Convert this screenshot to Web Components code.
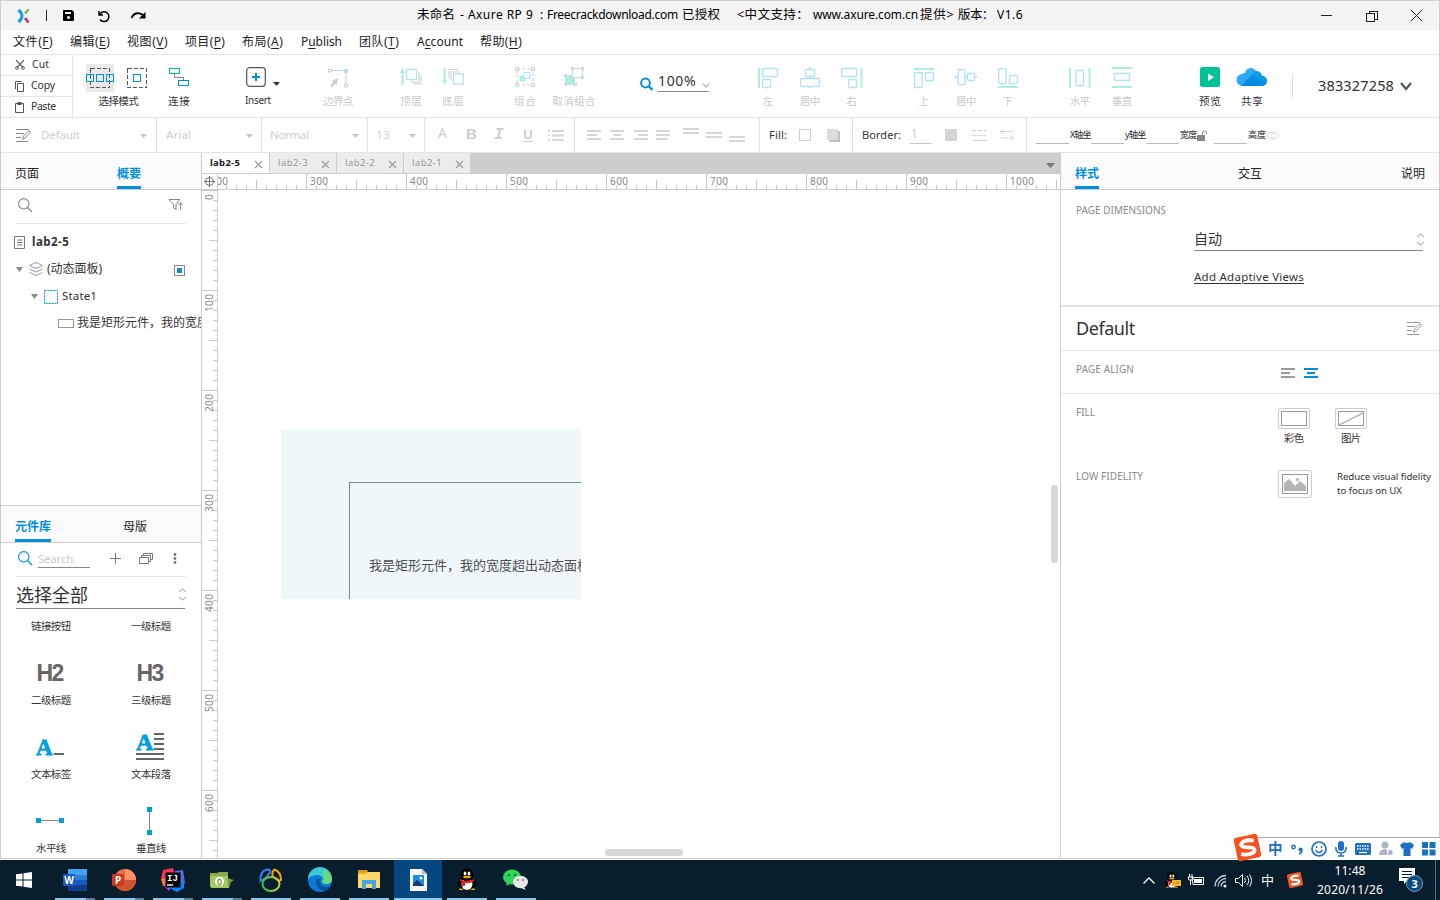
<!DOCTYPE html>
<html lang="zh-CN">
<head>
<meta charset="utf-8">
<title>Axure RP 9</title>
<style>
html,body{margin:0;padding:0;width:1440px;height:900px;overflow:hidden;background:#fff}
body{font-family:"Noto Sans","Noto Sans CJK SC",sans-serif;font-size:12px;color:#333}
</style>
</head>
<body>
<axure-desktop></axure-desktop>
<script>
const define=(name,css,html)=>{
  const tpl=document.createElement('template');
  tpl.innerHTML='<style>*{box-sizing:border-box}:host{display:block;box-sizing:border-box}svg{display:block;flex:none;overflow:visible}'+css+'</style>'+html;
  customElements.define(name,class extends HTMLElement{
    constructor(){super();this.attachShadow({mode:'open'})}
    connectedCallback(){if(!this.shadowRoot.firstChild)this.shadowRoot.appendChild(tpl.content.cloneNode(true))}
  });
};
const svg=(w,h,body,style='')=>`<svg width="${w}" height="${h}" viewBox="0 0 ${w} ${h}" fill="none" style="${style}">${body}</svg>`;

/* Single line of text, tracked out or in to a given width */
customElements.define('ax-text',class extends HTMLElement{
  connectedCallback(){
    if(this.shadowRoot)return;
    const g=(n,d)=>this.getAttribute(n)??d;
    const w=+g('w',0),s=g('s',12);
    this.attachShadow({mode:'open'}).innerHTML=`<style>:host{display:block;flex:none;position:relative;top:${g('dy',0)}px;margin-left:${g('ml',0)}px;${w?`width:${w}px;`:''}font-size:${s}px;line-height:${Math.ceil(s*1.3)}px;height:${Math.ceil(s*1.3)}px;${g('c','')?`color:${g('c')};`:''}${this.hasAttribute('b')?'font-weight:700;':''}${this.hasAttribute('u')?'text-decoration:underline;text-underline-offset:2px;':''}white-space:pre}span{display:inline-block;text-decoration:inherit}</style><span><slot></slot></span>`;
    if(w){
      const sp=this.shadowRoot.querySelector('span'),n=[...this.textContent].length,nat=sp.getBoundingClientRect().width;
      if(nat)sp.style.letterSpacing=((w-nat)/Math.max(1,n-.5)).toFixed(3)+'px';
    }
  }
});
const T=(t,w,s=12,ml=0,x='')=>`<ax-text w="${w}" s="${s}" ml="${ml}" ${x}>${t}</ax-text>`;

/* Title bar */
define('ax-titlebar',`:host{height:30px;background:#f3f3f3;border-top:1px solid #ccc;display:flex;align-items:center;color:#000}`,
 svg(13,14,`<path d="M1.500 1 Q8.500 7 1.500 13" stroke="#139fe0" stroke-width="3"/><path d="M11.500 .5L8 4.500" stroke="#7ac143" stroke-width="2.600"/><path d="M8 9L11.500 13.500" stroke="#e91e8c" stroke-width="2.600"/>`,'margin-left:16px')
 +svg(1,11,'<path d="M.5 0V11" stroke="#222"/>','margin-left:16px')
 +svg(11,11,'<path d="M1 0h8l2 2v8a1 1 0 0 1-1 1H1a1 1 0 0 1-1-1V1a1 1 0 0 1 1-1z" fill="#000"/><rect x="2" y="2" width="6" height="2" fill="#f3f3f3"/><circle cx="5.500" cy="7.500" r="1.600" fill="#f3f3f3"/>','margin-left:16px')
 +svg(13,12,'<path d="M2 1v4h4M2.500 4.800A4.900 4.900 0 1 1 3 9.500" stroke="#000" stroke-width="1.500"/>','margin-left:23px')
 +svg(15,9,'<path d="M.5 7C3 1 9 1 13 5" stroke="#000" stroke-width="1.800"/><path d="M14.500 1v6.500H8z" fill="#000"/>','margin-left:21px')
 +T('未命名',38,12.5,271,'dy="-1"')+T('- Axure RP 9',73,12,5,'dy="-1"')+T(':',3,12,7,'dy="-1"')+T('Freecrackdownload.com',131,12,4,'dy="-1"')+T('已授权',38,12.5,4,'dy="-1"')+T('&lt;中文支持：',72,12.5,17,'dy="-1"')+T('www.axure.com.cn',105,12,4,'dy="-1"')+T('提供&gt;',34,12.5,2,'dy="-1"')+T('版本：',36,12.5,4,'dy="-1"')+T('V1.6',26,12,3,'dy="-1"')
 +svg(11,1,'<path d="M0 .5H11" stroke="#222"/>','margin-left:298px')
 +svg(12,12,'<path d="M.5 3.500h8v8h-8zM3 3V1h8v8H9" stroke="#222" shape-rendering="crispEdges"/>','margin-left:34px')
 +svg(11,11,'<path d="M0 0L11 11M11 0L0 11" stroke="#222"/>','margin-left:33px'));

/* Menu bar */
define('ax-menubar',`:host{height:25px;border-bottom:1px solid #e4e4e4;display:flex;align-items:center;color:#222}u{text-underline-offset:2px}`,
 T('文件(<u>F</u>)',40,12,12)+T('编辑(<u>E</u>)',40,12,17)+T('视图(<u>V</u>)',41,12,17)+T('项目(<u>P</u>)',40,12,17)+T('布局(<u>A</u>)',41,12,17)+T('P<u>u</u>blish',41,12,18)+T('团队(<u>T</u>)',40,12,17)+T('A<u>c</u>count',46,12,18)+T('帮助(<u>H</u>)',42,12,17));

/* Toolbar button: icon area with caption underneath */
customElements.define('ax-tool',class extends HTMLElement{
  connectedCallback(){
    if(this.shadowRoot)return;
    const g=(n,d)=>this.getAttribute(n)??d;
    this.attachShadow({mode:'open'}).innerHTML=`<style>:host{display:flex;flex-direction:column;align-items:center;flex:none;width:${g('w',28)}px;margin-left:${g('ml',14)}px;color:${this.hasAttribute('dim')?'#c9c9c9':'#333'}}div{height:28px;display:flex;align-items:center;gap:9px;justify-content:center;position:relative}ax-text{margin-top:2px;left:${g('dx',0)}px}</style><div><slot></slot></div>${T(g('label'),g('lw',20),g('s',10.5))}`;
  }
});
const tool=(label,lw,ml,icon,x='dim')=>`<ax-tool label="${label}" lw="${lw}" ml="${ml}" ${x}>${icon}</ax-tool>`;
const B='#b4dff8',G='#aeeedd';
const A=(body)=>svg(20,20,`<g stroke-width="1.300">${body}</g>`);
define('ax-clip',`:host{width:72px;border-right:1px solid #e4e4e4;display:grid;grid-template-rows:20px 21px 21px;color:#333;flex:none}div{display:flex;align-items:center;padding-left:14px}div+div{border-top:1px solid #e4e4e4}`,
 '<div>'+svg(10,10,'<path d="M1 0L8 7.500M9 0L2 7.500" stroke="#666" stroke-width="1.200"/><circle cx="2" cy="8" r="1.400" stroke="#666"/><circle cx="8" cy="8" r="1.400" stroke="#666"/>')+T('Cut',17,10.5,7,'dy="-1"')
 +'</div><div>'+svg(10,11,'<path d="M2.500 2.500h6v8h-6zM.5 8V.5h6" stroke="#555"/>')+T('Copy',24,10.5,6,'dy="-1"')
 +'</div><div>'+svg(10,11,'<path d="M.5 1.500h8v9h-8z" stroke="#555"/><path d="M2.500 0h4v3h-4z" fill="#555"/>')+T('Paste',25,10.5,6,'dy="-1"')+'</div>');
define('ax-zoom',`:host{display:flex;flex:none;margin-left:52px;height:28px;padding-top:7px}div{width:52px;margin-left:4px;height:21px;display:flex;align-items:flex-start;position:relative;background:linear-gradient(#888,#888) 0 20px/51px 1px no-repeat}`,
 svg(14,14,'<circle cx="5.500" cy="6" r="4.400" stroke="#008fe0" stroke-width="2"/><path d="M8.500 9l4 4" stroke="#008fe0" stroke-width="2.400"/>','margin-top:6px')
 +'<div>'+T('100%',38,14,0)+svg(8,5,'<path d="M.5 .5L4 4 7.500 .5" stroke="#bbb" stroke-width="1.400"/>','margin:12px 0 0 6px')+'</div>');
define('ax-toolbar',`:host{height:63px;border-bottom:1px solid #e4e4e4;display:flex}.sel{display:flex;background:#e9e9e9;width:28px;height:28px;align-items:center;justify-content:center}.row{display:flex;flex:1;padding-top:9px}.bar{width:1px;height:24px;background:#ddd;margin:10px 0 0 25px}`,
 `<ax-clip></ax-clip><div class="row">`
 +tool('选择模式',40,13,'<div class="sel">'+svg(28,20,'<g shape-rendering="crispEdges"><rect x="4.500" y=".5" width="19" height="19" stroke="#555" stroke-dasharray="4 2"/><path d="M.5 6.500h7v7h-7zM10.500 6.500h7v7h-7zM20.500 6.500h7v7h-7z" stroke="#008fe0"/></g>')+'</div>'+svg(28,20,'<g shape-rendering="crispEdges"><rect x="4.500" y=".5" width="19" height="19" stroke="#555" stroke-dasharray="4 2"/><path d="M10.500 6.500h7v7h-7z" stroke="#008fe0"/></g>'),'w="65"')
 +tool('连接',22,14,svg(20,18,'<g shape-rendering="crispEdges"><path d="M5.500 5v4.500h9V13" stroke="#888"/><rect x=".5" y=".5" width="10" height="5" stroke="#00bf8f"/><rect x="9.500" y="12.500" width="10" height="5" stroke="#008fe0"/></g>','margin-top:-2px'),'')
 +tool('Insert',26,49,svg(20,20,'<rect x=".7" y=".7" width="18.600" height="18.600" rx="3" stroke="#555" stroke-width="1.200"/><path d="M6 10h8M10 6v8" stroke="#008fe0" stroke-width="2"/>','margin-top:-2px'),'dx="2" s="10"')
 +svg(7,4,'<path d="M0 0h7L3.500 4z" fill="#333"/>','margin:18px 0 0 3px')
 +tool('边界点',30,44,svg(20,20,`<path d="M2 2.500h16v15" stroke="#ccc"/><path d="M.5 1h3v3h-3zM16.500 16h3v3h-3z" stroke="#ccc" fill="#fff"/><path d="M16 1h4v4h-4z" fill="${B}"/><path d="M10 10L3 13l2.500 1L2 18l2 1 3.500-3.500 1 2z" fill="#ccc"/>`))
 +tool('顶层',22,45,svg(22,18,`<path d="M2.500 17V3" stroke="${G}" stroke-width="2"/><path d="M0 5L2.500 0 5 5z" fill="${G}"/><path d="M10 14h9V4M13 16h8V7" stroke="#ccc"/><rect x="6.500" y="1.500" width="10" height="10" stroke="${B}" stroke-width="1.300" fill="#fff"/>`,'margin-top:-2px'))
 +tool('底层',22,14,svg(22,18,`<path d="M2.500 0V13" stroke="${G}" stroke-width="2"/><path d="M0 12L2.500 17 5 12z" fill="${G}"/><path d="M7 10V1.500h9M9 13V4h9" stroke="#ccc"/><rect x="11.500" y="6" width="10" height="10" stroke="${B}" stroke-width="1.300" fill="#fff"/>`,'margin-top:-2px'))
 +tool('组合',22,44,svg(20,20,`<rect x="2" y="2" width="16" height="16" stroke="#ccc" stroke-dasharray="3 2"/><g stroke="#ccc" fill="#fff"><path d="M.5.5h3v3h-3zM16.500.5h3v3h-3zM.5 16.500h3v3h-3zM16.500 16.500h3v3h-3z"/></g><path d="M4.500 8.500h6v6h-6z" fill="${G}"/><path d="M9 5.500h6v6h-6z" stroke="${B}" fill="#fff"/>`,'margin-top:-2px'))
 +tool('取消组合',43,21,svg(20,20,`<path d="M1 8h10v10H1z" fill="${G}"/><path d="M8.500 1.500h10v9h-10z" stroke="${B}" fill="#fff"/><g stroke="#ccc" fill="#fff"><path d="M7.500.5h2v2h-2zM17.500.5h2v2h-2zM17.500 9.500h2v2h-2zM.5 7.500h2v2h-2zM.5 16.500h2v2h-2zM10.500 16.500h2v2h-2zM7.500 10.500h2v2h-2z"/></g>`,'margin-top:-2px'))
 +`<ax-zoom></ax-zoom>`
 +tool('左',11,44,A(`<path d="M1 0v20" stroke="${G}" stroke-width="2"/><rect x="4.500" y=".5" width="15" height="8" rx="1" stroke="${B}"/><rect x="4.500" y="11.500" width="8" height="8" rx="1" stroke="${B}"/>`))
 +tool('居中',20,14,A(`<path d="M10 -1v21" stroke="${G}" stroke-width="2"/><rect x="5.500" y="1.500" width="9" height="7" rx="1" stroke="${B}" fill="#fff"/><rect x=".6" y="10.500" width="18.800" height="8" rx="1" stroke="${B}" fill="#fff"/>`))
 +tool('右',11,14,A(`<path d="M19.500 0v20" stroke="${G}" stroke-width="2"/><rect x="-.5" y=".5" width="15" height="8" rx="1" stroke="${B}"/><rect x="6.500" y="11.500" width="8" height="8" rx="1" stroke="${B}"/>`))
 +tool('上',11,44,A(`<path d="M0 1h20" stroke="${G}" stroke-width="2"/><rect x=".6" y="4.500" width="7.500" height="15" rx="1" stroke="${B}"/><rect x="11.500" y="4.500" width="8" height="8" rx="1" stroke="${B}"/>`))
 +tool('居中',20,14,A(`<path d="M-1 9h22" stroke="${G}" stroke-width="2"/><rect x="2" y="1.500" width="7" height="15" rx="1" stroke="${B}" fill="#fff"/><rect x="11.500" y="5.500" width="7" height="7" rx="1" stroke="${B}" fill="#fff"/>`))
 +tool('下',11,14,A(`<path d="M0 19h20" stroke="${G}" stroke-width="2"/><rect x=".6" y=".6" width="7.500" height="15" rx="1" stroke="${B}"/><rect x="11.500" y="7.600" width="8" height="8" rx="1" stroke="${B}"/>`))
 +tool('水平',20,44,A(`<path d="M0 0v20M19.500 0v20" stroke="${G}" stroke-width="2"/><rect x="6" y="2.500" width="7.500" height="15" rx="1" stroke="${B}"/>`))
 +tool('垂直',20,14,A(`<path d="M0 0h20M0 19h20" stroke="${G}" stroke-width="2"/><rect x="2.500" y="5.500" width="15" height="7" rx="1" stroke="${B}"/>`))
 +tool('预览',22,60,svg(20,20,'<rect width="20" height="20" rx="2.500" fill="#00c298"/><path d="M8 6.500v7.500l6-3.700z" fill="#fff"/>','margin-top:-2px'),'')
 +tool('共享',22,13,svg(30,20,'<path d="M6 19a6 6 0 0 1-1-12 5 5 0 0 1 3-1A6 6 0 0 1 19 4a6 6 0 0 1 6 5 5 5 0 0 1 0 10z" fill="#2ba9f5"/><path d="M14 8.500A6 6 0 0 1 25 9a5 5 0 0 1 0 10H4z" fill="#078de0"/><path d="M14 8.500L17 5a6 6 0 0 1 8 4 5 5 0 0 1 4.500 6z" fill="#0d9bee"/>','margin-top:-3px'),'w="30"')
 +'<div class="bar"></div>'+T('383327258',76,14.5,25,'dy="12"')+svg(12,9,'<path d="M1 1l5 6 5-6" stroke="#555" stroke-width="2.200"/>','margin:18px 0 0 6px')
 +'</div>');

/* Formatting bar */
const editIcon=(c)=>svg(15,13,`<path d="M0 .5h13M0 4.500h8M0 8.500h5M0 12.500h12" stroke="${c}"/><path d="M6.500 10.500l1-3.500L13 1.500l1.500 1.500L9 9z" stroke="${c}" fill="#fff"/>`);
const caret=svg(7,4,'<path d="M0 0h7L3.500 4z" fill="#c4c4c4"/>','margin-top:2px');
const lines=(w,h,rows,c='#d6d6d6')=>svg(w,h,`<g fill="${c}">`+rows.map(r=>`<rect x="${r[0]}" y="${r[1]}" width="${r[2]}" height="2"/>`).join('')+'</g>');
define('ax-formatbar',`:host{height:35px;border-bottom:1px solid #e4e4e4;display:flex;color:#cdcdcd}section{display:flex;align-items:center;flex:none;border-right:1px solid #e0e0e0;height:34px}.f{width:33px;height:1px;background:#bbb;align-self:flex-end;margin-bottom:8px}`,
 `<section style="width:156px;padding-left:15px">${editIcon('#888')}${T('Default',39,11.5,10,'dy="-1"')}<span style="flex:1"></span>${caret}<span style="width:9px"></span></section>
 <section style="width:105px;padding-left:9px">${T('Arial',25,11.5,0,'dy="-1"')}<span style="flex:1"></span>${caret}<span style="width:8px"></span></section>
 <section style="width:106px;padding-left:8px">${T('Normal',39,11.5,0,'dy="-1"')}<span style="flex:1"></span>${caret}<span style="width:8px"></span></section>
 <section style="width:57px;padding-left:8px">${T('13',14,11.5,0,'dy="-1"')}<span style="flex:1"></span>${caret}<span style="width:8px"></span></section>
 <section style="width:150px;padding-left:13px">${T('A',10,13.5,0,'dy="-2"')}${T('B',9,15,18,'b dy="-1" style="font-family:\'Liberation Sans\'"')}<ax-text w="11" s="16" ml="19" b style="font-style:italic;font-family:'Liberation Mono'">I</ax-text>${T('U',10,13,18,'b u dy="-1"')}${svg(16,11,'<g fill="#d6d6d6"><path d="M0 0h2v2H0zM0 4.500h2v2H0zM0 9h2v2H0zM4 0h12v2H4zM4 4.500h12v2H4zM4 9h12v2H4z"/></g>','margin-left:15px')}</section>
 <section style="width:185px;padding-left:12px">${lines(14,10,[[0,0,14],[0,4,10],[0,8,14]])}<span style="width:9px"></span>${lines(14,10,[[0,0,14],[3,4,8],[0,8,14]])}<span style="width:10px"></span>${lines(14,10,[[0,0,14],[4,4,10],[0,8,14]])}<span style="width:8px"></span>${lines(14,10,[[0,0,14],[0,4,14],[0,8,12]])}<span style="width:13px"></span>${lines(16,14,[[0,0,16],[0,4,16]])}<span style="width:7px"></span>${lines(16,8,[[0,1,16],[0,5,16]])}<span style="width:7px"></span>${lines(16,14,[[0,8,16],[0,12,16]])}</section>
 <section style="width:93px;padding-left:9px">${T('Fill:',18,11,0,'c="#333" dy="-1"')}${svg(12,12,'<rect x=".5" y=".5" width="11" height="11" stroke="#ccc"/>','margin-left:12px')}${svg(13,13,'<path d="M2 2h11v11H2z" fill="#c0c0c0"/><path d="M0 0h11v11H0z" fill="#dcdcdc"/>','margin-left:16px')}</section>
 <section style="width:174px;padding-left:9px">${T('Border:',39,11,0,'c="#333" dy="-1"')}<div style="width:22px;height:18px;margin:0 0 0 9px;border-bottom:1px solid #c8c8c8;padding-left:1px">${T('1',6,12,0)}</div>${svg(12,12,'<path d="M0 0h12v12H0z" fill="#d4d4d4"/>','margin-left:13px')}${svg(15,11,'<path d="M0 .5h15" stroke="#d0d0d0" stroke-dasharray="4 2"/><path d="M0 5.500h15" stroke="#d0d0d0" stroke-dasharray="2 1"/><path d="M1 10.500h14" stroke="#d0d0d0"/>','margin-left:15px')}${svg(14,12,'<path d="M3.500 0L.5 2.500l3 2.500M.5 2.500H13M10.500 6.500l3 2.500-3 2.500M13.500 9H1" stroke="#d4d4d4"/>','margin-left:13px')}</section>
 <section style="border:0;padding-left:9px;color:#222"><div class="f"></div>${T('X轴坐',21,9,1)}<div class="f"></div>${T('y轴坐',21,9,1)}<div class="f"></div>${T('宽度',17,9,1)}${svg(10,11,'<path d="M0 5h8v6H0z" fill="#888"/><path d="M5.500 5V3a2 2 0 0 1 4 0v1" stroke="#888"/>')}<div class="f" style="margin-left:7px"></div>${T('高度',18,9,1)}${svg(14,9,'<path d="M.5 4.500Q7-3 13.500 4.500 7 12 .5 4.500z" stroke="#ddd"/><circle cx="7" cy="4.500" r="2.200" stroke="#ddd"/>')}</section>`);

/* Panels */
const head=`.head{height:37px;background:#fbfbfb;border-bottom:1px solid #ccc;display:flex;padding-top:12px;color:#222}.on{height:24px;border-bottom:3px solid #008fe0;color:#008fe0}.row{display:flex;align-items:center}`;
const mag=c=>svg(14,14,`<circle cx="5.800" cy="5.800" r="5.200" stroke="${c}" stroke-width="1.100"/><path d="M9.500 9.500l4.500 4.500" stroke="${c}" stroke-width="1.200"/>`);
const tri=svg(7,5,'<path d="M0 0h7L3.500 5z" fill="#888"/>');
const spin=svg(9,13,'<path d="M1 4l3.500-3L8 4M1 9l3.500 3L8 9" stroke="#bbb" stroke-width="1.200"/>','margin-right:-2px');
define('ax-outline',`:host{height:353px;border-bottom:1px solid #ccc;overflow:hidden}${head}.s{height:34px;margin:0 15px;border-bottom:1px solid #e4e4e4;padding:0 3px 4px 2px;justify-content:space-between}.r{height:27px}.tree{padding-top:5px}`,
 `<div class="head"><div>${T('页面',24,12,14,'dy="1"')}</div><div class="on" style="margin-left:78px">${T('概要',24,12,0,'b dy="1"')}</div></div>
 <div class="row s">${mag('#888')}${svg(14,12,'<path d="M0 .5h11L7 5.500v5L4.500 9V5.500z" stroke="#888"/><path d="M11.500 11V4M9.500 6l2-2.500 2 2.500" stroke="#888"/>')}</div>
 <div class="tree"><div class="row r">${svg(11,13,'<path d="M.5.5h10v12H.5zM3 4h5.500M3 6.500h5.500M3 9h5.500" stroke="#777"/>','margin-left:13px')}${T('lab2-5',37,11.5,7,'b dy="-1"')}</div>
 <div class="row r">${tri.replace('style="','style="margin-left:15px;')}${svg(14,14,'<path d="M7 .5l6.500 3L7 6.500.5 3.500zM.5 7L7 10l6.500-3M.5 10.500L7 13.500l6.500-3" stroke="#999"/>','margin:-2px 0 0 6px')}${T('(动态面板)',55,12,4,'dy="-1"')}${svg(11,11,'<rect x=".5" y=".5" width="10" height="10" stroke="#888"/><path d="M3 3h5v5H3z" fill="#1487d8"/>','margin:2px 0 0 72px')}</div>
 <div class="row r">${tri.replace('style="','style="margin-left:30px;')}${svg(14,14,'<rect x=".5" y=".5" width="13" height="13" stroke="#008fe0" stroke-dasharray="2 1"/>','margin-left:6px')}${T('State1',35,11.5,4,'dy="-1"')}</div>
 <div class="row r">${svg(16,9,'<rect x=".5" y=".5" width="15" height="8" stroke="#999"/>','margin-left:57px')}${T('我是矩形元件，我的宽度',132,12,3,'dy="-1"')}</div></div>`);
define('ax-widget',`:host{display:flex;flex-direction:column;align-items:center;height:74px;justify-content:flex-end;width:100px}div{flex:1;display:flex;align-items:center;justify-content:center;padding:18px 2px 0 0;font:700 23px "Liberation Sans";color:#666}`,`<div><slot></slot></div><slot name="label"></slot>`);
const wid=(l,w,icon)=>`<ax-widget>${icon}<ax-text slot="label" w="${w}" s="10.5" dy="-1">${l}</ax-text></ax-widget>`;
const bigA=`<ax-text w="16" s="23" dy="1" c="#009ddb" style="font-family:'Liberation Serif';font-weight:700;-webkit-text-stroke:.8px #009ddb">A</ax-text>`;
define('ax-library',`:host{flex:1;overflow:hidden}${head}.s{height:34px;margin:0 15px;border-bottom:1px solid #e4e4e4;padding:0 0 3px 2px}.sel{height:32px;margin:0 16px 0 15px;border-bottom:1px solid #888;justify-content:space-between;padding-top:4px}.g{display:grid;grid-template-columns:100px 100px;margin-top:-49px;clip-path:inset(50px 0 0 0)}`,
 `<div class="head"><div class="on" style="margin-left:14px">${T('元件库',36,12,0,'b dy="1"')}</div><div>${T('母版',24,12,72,'dy="1"')}</div></div>
 <div class="row s">${mag('#008fe0')}<div style="width:52px;height:20px;border-bottom:1px solid #888;margin-left:6px;padding-top:2px">${T('Search.',38,11.5,0,'c="#ccc" dy="1"')}</div>${svg(11,11,'<path d="M5.500 0v11M0 5.500h11" stroke="#777"/>','margin-left:20px')}${svg(14,11,'<path d="M.5 4.500h9v6h-9zM2.500 4V2.500h9v6H10M4.500 2V.5h9v6H12" stroke="#777"/>','margin-left:18px')}${svg(4,11,'<circle cx="2" cy="1.500" r="1.400" fill="#777"/><circle cx="2" cy="5.500" r="1.400" fill="#777"/><circle cx="2" cy="9.500" r="1.400" fill="#777"/>','margin-left:20px')}</div>
 <div class="row sel">${T('选择全部',72,18)}${spin}</div>
 <div class="g">${wid('链接按钮',40,'')}${wid('一级标题',40,'')}${wid('二级标题',40,'<ax-text w="27" s="23" style="font-family:\'Liberation Sans\'">H2</ax-text>')}${wid('三级标题',40,'<ax-text w="27" s="23" style="font-family:\'Liberation Sans\'">H3</ax-text>')}
 ${wid('文本标签',40,bigA+svg(10,2,'<path d="M0 1h10" stroke="#666" stroke-width="2"/>','margin:14px 0 0 2px'))}
 ${wid('文本段落',40,svg(28,28,'<g stroke="#666" stroke-width="2"><path d="M18 1h10M18 6h10M18 11h10M18 16h10M0 21h28M0 26h28"/></g><text x="0" y="17" textLength="17" font-family="Liberation Serif" font-size="24" font-weight="700" fill="#009ddb" stroke="#009ddb" stroke-width=".8">A</text>'))}
 ${wid('水平线',30,svg(28,5,'<path d="M2 2.500h24" stroke="#888"/><path d="M0 0h5v5H0zM23 0h5v5h-5z" fill="#009ddb"/>','margin-top:-2px'))}${wid('垂直线',30,svg(5,28,'<path d="M2.500 2v24" stroke="#888"/><path d="M0 0h5v5H0zM0 23h5v5H0z" fill="#009ddb"/>','margin:-1px 1px 0 0'))}</div>`);

/* Canvas with document tabs and rulers */
const tabs=['lab2-5','lab2-3','lab2-2','lab2-1'].map((n,i)=>`<div class="tab ${i?'':'act'}">${T(n,30,9.5,8,i?'c="#999" dy="-1"':'b c="#222" dy="-1"')}${svg(7,7,'<path d="M0 0l7 7M7 0L0 7" stroke="#999" stroke-width="1.100"/>',`margin:2px 0 0 ${i?14:15}px`)}</div>`).join('');
let hr='',vr='';
for(let v=200,x=4;x<858;v+=10,x+=10){const m=v%100===0;hr+=`<path d="M${x+.5} ${m?0:v%50?11:6}V15" stroke="#c8c8c8"/>`;if(m)hr+=`<text x="${x+4}" y="11" textLength="${v>999?24:18}">${v}</text>`}
for(let v=0,y=0;y<669;v+=10,y+=10){const m=v%100===0;vr+=`<path d="M${m?0:v%50?11:7} ${y+.5}H15" stroke="#c8c8c8"/>`;if(m)vr+=`<text transform="translate(11 ${y+(v?22:10)}) rotate(-90)" textLength="${v?18:6}">${v}</text>`}
define('ax-canvas',`:host{width:858px;display:flex;flex-direction:column}.tabs{height:21px;background:#cdcdcd;display:flex;position:relative}.tab{width:67px;height:21px;background:#ececec;border-right:1px solid #ccc;border-bottom:1px solid #ccc;display:flex;align-items:center}.act{background:#fff;width:68px}.tabs>svg{margin:10px 5px 0 auto}.ruler{height:16px;border-bottom:1px solid #ccc;display:flex}.ruler svg,.v{font:10px "Noto Sans"}.clip{overflow:hidden;width:842px;height:15px}.body{display:flex;flex:1}.v{width:16px;border-right:1px solid #ccc;height:669px;overflow:hidden}.stage{flex:1;position:relative;overflow:hidden}.dp{position:absolute;left:63px;top:239px;width:300px;height:170px;background:#eff7fa;overflow:hidden}.box{position:absolute;left:68px;top:53px;width:360px;height:180px;border:1px solid #7d8688;color:#4a5052;padding:74px 0 0 19px}.sv{position:absolute;right:2px;top:295px;width:7px;height:78px;border-radius:3px;background:#d8d8d8}.sh{position:absolute;left:387px;bottom:3px;width:78px;height:7px;border-radius:3px;background:#d8d8d8}`,
 `<div class="tabs">${tabs}${svg(9,5,'<path d="M0 0h9L4.500 5z" fill="#777"/>')}</div>
 <div class="ruler">${svg(15,15,'<circle cx="7.500" cy="7.500" r="4" stroke="#777" fill="none"/><path d="M7.500 2v11M2 7.500h11" stroke="#777"/>')}<span style="width:1px;height:15px;background:#ccc"></span><div class="clip">${svg(842,15,`<g transform="translate(-16 0)" fill="#888">${hr}</g>`)}</div></div>
 <div class="body"><div class="v">${svg(15,669,`<g fill="#888">${vr}</g>`)}</div><div class="stage"><div class="dp"><div class="box">${T('我是矩形元件，我的宽度超出动态面板范围',247,13)}</div></div><div class="sv"></div><div class="sh"></div></div></div>`);

/* Inspector */
define('ax-inspector',`:host{width:379px;border-left:1px solid #ccc}${head}.l{width:118px}section{display:flex;border-bottom:1px solid #e4e4e4;padding-left:15px;color:#333}.g{color:#8a8a8a}.btn{border:1px solid #ccc;border-radius:2px;display:flex;align-items:center;justify-content:center;width:32px;height:21px}.col{display:flex;flex-direction:column;align-items:center;width:32px;gap:2px}`,
 `<div class="head"><div class="on" style="margin-left:14px">${T('样式',24,12,0,'b dy="1"')}</div>${T('交互',24,12,139,'dy="1"')}${T('说明',24,12,139,'dy="1"')}</div>
 <section style="height:117px;border-bottom:2px solid #e4e4e4"><div class="l g" style="padding-top:14px">${T('PAGE DIMENSIONS',90,10)}</div><div><div class="row" style="width:229px;height:61px;border-bottom:1px solid #888;padding-top:38px;justify-content:space-between">${T('自动',28,14,0,'dy="-1"')}${spin}</div><div style="padding-top:18px">${T('Add Adaptive Views',110,11.5,0,'u')}</div></div></section>
 <section class="row" style="height:44px;justify-content:space-between;padding-right:17px">${T('Default',59,18,0,'dy="-1"')}${editIcon('#999')}</section>
 <section style="height:43px"><div class="g" style="width:205px;padding-top:12px">${T('PAGE ALIGN',58,10)}</div><div style="display:flex;gap:9px;padding-top:17px">${lines(14,10,[[0,0,14],[0,4,9],[0,8,14]],'#999')}${lines(14,10,[[0,0,14],[3,4,8],[0,8,14]],'#008fe0')}</div></section>
 <section style="border:0;height:64px"><div class="g" style="width:202px;padding-top:12px">${T('FILL',19,10)}</div><div style="display:flex;gap:25px;padding-top:14px"><div class="col"><div class="btn">${svg(26,15,'<rect x=".5" y=".5" width="25" height="14" stroke="#999"/>')}</div>${T('彩色',20,10.5)}</div><div class="col"><div class="btn">${svg(26,15,'<rect x=".5" y=".5" width="25" height="14" stroke="#999"/><path d="M1 14L25 2" stroke="#bbb" stroke-width="1.500"/>')}</div>${T('图片',20,10.5)}</div></div></section>
 <section style="border:0;padding-top:12px"><div class="g" style="width:202px">${T('LOW FIDELITY',67,10)}</div><div class="btn" style="width:34px;height:28px">${svg(26,20,'<rect x=".5" y=".5" width="25" height="19" stroke="#999"/><path d="M2 17V9l5-4 6 7 5-5 6 5v5z" fill="#b5b5b5"/><circle cx="15.500" cy="5.500" r="1.600" fill="#b5b5b5"/>')}</div><div style="margin-left:25px;display:grid;gap:1px;align-content:start">${T('Reduce visual fidelity',94,9.7)}${T('to focus on UX',65,9.7)}</div></section>`);

/* Input method strip */
const sogou=(s)=>svg(s,s,'<g transform="scale('+(s/27)+') rotate(-12 13.500 13.500)"><rect x="1.500" y="1.500" width="24" height="24" rx="3" fill="#f4511e"/><path d="M21 8C13 5 7 7 8 10.500S20 13 20 17 11 21.500 6 18.500" stroke="#fff" stroke-width="3.800"/></g>');
const U='#1d6fc4';
define('ax-ime',`:host{position:absolute;left:1250px;top:837px;width:190px;height:22px;background:#fff;border-top:1px solid #aaa;display:flex;align-items:center;color:${U}}.s{position:absolute;left:-16px;top:-4px}`,
 `<div class="s">${sogou(27)}</div>${T('中',14,14.5,18,'b')}${svg(12,12,`<circle cx="2.500" cy="4" r="1.700" stroke="${U}" stroke-width="1.400"/><circle cx="9.500" cy="6.500" r="2" fill="${U}"/><path d="M11 7q0 3-3 4" stroke="${U}" stroke-width="1.500"/>`,'margin-left:9px')}${svg(16,16,`<circle cx="8" cy="8" r="7" stroke="${U}" stroke-width="1.700"/><path d="M5.500 5v2M10.500 5v2M4.500 9q3.500 5 7 0" stroke="${U}" stroke-width="1.400"/>`,'margin-left:8px')}${svg(12,16,`<rect x="3" y="0" width="6" height="10" rx="3" fill="${U}"/><path d="M.7 6q0 6 5.300 6t5.300-6M6 12v3M3 15h6" stroke="${U}" stroke-width="1.500"/>`,'margin-left:8px')}${svg(16,12,`<rect width="16" height="12" rx="1.500" fill="${U}"/><path d="M2 3h12M2 6h12" stroke="#fff" stroke-width="1.500" stroke-dasharray="1.500 1"/><path d="M4 9.500h8" stroke="#fff" stroke-width="1.300"/>`,'margin-left:8px')}${svg(14,15,'<circle cx="6" cy="4" r="3.500" fill="#aab6ca"/><path d="M0 14q0-6 6-6t6 6z" fill="#aab6ca"/><path d="M8 8.500h6v6H8z" fill="#eef"/><path d="M13 10h-3v1.500h3V13h-4" stroke="#8e9cb6"/>','margin-left:8px')}${svg(14,14,`<path d="M4 0q3 2 6 0l4 3-2 4-1.500-1v8h-7V6L2 7 0 3z" fill="${U}"/>`,'margin-left:7px')}${svg(14,13,`<path d="M0 0h6v6H0zM7.500 0h6v6h-6zM0 7.500h6v6H0zM7.500 7.500h6v6h-6z" fill="${U}"/>`,'margin-left:8px')}`);

/* Taskbar */
const task=(icon,c='')=>`<div class="t ${c}">${icon}</div>`;
const office=(c,l,body)=>svg(24,24,body+`<rect y="6" width="12" height="12" rx="1.200" fill="${c}"/><text x="6" y="15.500" text-anchor="middle" font-family="Noto Sans" font-weight="700" font-size="10" fill="#fff">${l}</text>`);
const qq=svg(22,24,'<path d="M3 21l5-2v3H3zM19 21l-5-2v3h5z" fill="#f5a400"/><ellipse cx="11" cy="15" rx="8" ry="7.500" fill="#000"/><path d="M4 11L1 17l2 1 4-4zM18 11l3 6-2 1-4-4z" fill="#000"/><ellipse cx="11" cy="16" rx="5.500" ry="6" fill="#fff"/><circle cx="11" cy="7" r="6.500" fill="#000"/><ellipse cx="9" cy="5.500" rx="1.400" ry="2" fill="#fff"/><ellipse cx="13" cy="5.500" rx="1.400" ry="2" fill="#fff"/><ellipse cx="11" cy="9" rx="4" ry="1.300" fill="#f5a400"/><path d="M4 11q7 4 14 0v2.500q-5 2.500-9 1.500v3H6v-4l-2-1z" fill="#e51c23"/>');
define('ax-taskbar',`:host{height:40px;background:#091e2c;display:flex;color:#fff}.start{width:55px;padding:12px 0 0 16px}.t{width:40px;height:40px;margin-right:9px;border-bottom:2px solid #90c4ee;display:flex;align-items:center;justify-content:center;position:relative;flex:none;padding-top:2px}.m::after{content:"";position:absolute;right:0;bottom:-2px;width:9px;height:2px;background:#587e9c}.act{width:48px;margin:0 5px 0 -4px;background:#06477f}.tray{margin-left:auto;display:flex;align-items:center;height:40px;flex:none}.clock{display:flex;flex-direction:column;align-items:center;width:66px;margin-left:14px;gap:3px}.n{position:relative;margin-left:16px;width:24px;height:24px}.bd{position:absolute;left:7px;top:7px;width:17px;height:17px;border-radius:50%;background:#0b4a80;border:1px solid #7e9cb5;display:flex;align-items:center;justify-content:center}.end{width:1px;height:40px;background:#5c6a74;margin:0 4px 0 12px}`,
 `<div class="start">${svg(16,16,'<path d="M0 2.300l6.500-.9v6.100H0zM7.500 1.200L16 0v7.500H7.500zM0 8.500h6.500v6.100L0 13.700zM7.500 8.500H16V16l-8.500-1.200z" fill="#fff"/>')}</div>`
 +task(office('#185abd','W','<path d="M5 1h19v6H5z" fill="#41a5ee"/><path d="M5 7h19v5H5z" fill="#2b7cd3"/><path d="M5 12h19v5H5z" fill="#185abd"/><path d="M5 17h19v6H5z" fill="#103f91"/>'),'m')
 +task(office('#c43e1c','P','<circle cx="13" cy="12" r="11" fill="#ed6c47"/><path d="M13 1a11 11 0 0 1 11 11H13z" fill="#ff8f6b"/><path d="M2 12h22a11 11 0 0 1-22 0z" fill="#d35230"/>'),'m')
 +task(svg(24,24,'<path d="M2 2l10-2 2 8L5 17 0 12z" fill="#fe315d"/><path d="M14 3l8-1 2 13-10 3z" fill="#4f6ee0"/><path d="M0 11l6-1 2 9-6-1z" fill="#ef7b35"/><path d="M8 18l15-4v6l-7 4-6-3z" fill="#0b84ff"/><path d="M2 17h9l-3 6z" fill="#b345f1"/><rect x="4.500" y="4.500" width="15" height="15" fill="#000"/><path d="M6 17h6" stroke="#fff" stroke-width="1.400"/><text x="6" y="13" font-family="Liberation Mono" font-weight="700" font-size="9" fill="#fff">IJ</text>'),'m')
 +task(svg(24,18,'<path d="M0 2h7l2-1h9v15H0z" fill="#88a84a"/><path d="M0 5h18l1 12H1z" fill="#a5c765"/><path d="M17 7l7 2-3 2-2 6z" fill="#6f9b33"/><circle cx="9.500" cy="10.500" r="4.500" fill="#fff"/><path d="M8 13.500V10q0-2 2.500-2M11 8.500v3.500q0 2-2.500 2" stroke="#6f9b33" stroke-width="1.300"/>'),'m')
 +task(svg(24,24,'<defs><linearGradient id="nv"><stop stop-color="#3dbb45"/><stop offset="1" stop-color="#c9cf35"/></linearGradient></defs><g stroke-width="2"><path d="M1.500 13Q1 2 9 1.500q3 0 2 3L7 9.500 5 11z" stroke="#3b7bf6"/><path d="M13.500 8Q13 3 15.500 1.500 22 4 22 12l-2 1z" stroke="#f5a400"/><ellipse cx="12" cy="16" rx="8.500" ry="7" stroke="url(#nv)"/></g>'))
 +task(svg(24,24,'<circle cx="12" cy="12" r="12" fill="#0c7bd1"/><path d="M0 11A12 12 0 0 1 24 11q0 5-6 5-4 0-4-3 1-1 1-2-1-4-6-4-6 0-9 4z" fill="#3cc8d8"/><path d="M14 1Q24 4 24 11q0 5-6 5-4 0-4-3 4-4 0-12z" fill="#65dc78"/><path d="M8 12q-1 9 8 11 4-1 7-5-5 2-9 0-4-3-2-7-4 0-4 1z" fill="#0d529e"/>'))
 +task(svg(22,20,'<path d="M0 0h9l1 2H0z" fill="#d89b12"/><path d="M0 2h22v16H0z" fill="#ffd868"/><path d="M0 2h10l-2 2H0z" fill="#e8ab24"/><path d="M4 10h14v9h-4v-5H8v5H4z" fill="#42a5e5"/>'))
 +task(svg(17,22,'<path d="M0 0h12l5 5v17H0z" fill="#f7f7f7"/><path d="M12 0v5h5z" fill="#bbb"/><path d="M3 6h11v11H3z" fill="#1e88e5"/><path d="M3 15l4-4 7 6H3z" fill="#123a6d"/><circle cx="11" cy="9" r="1.500" fill="#fff"/>'),'act')+task(qq)
 +task(svg(26,22,'<ellipse cx="9" cy="8" rx="9" ry="7.500" fill="#2fd45b"/><path d="M4 13l-1 4 4-2z" fill="#2fd45b"/><ellipse cx="17.500" cy="13" rx="7.500" ry="6.200" fill="#e8e8e8"/><path d="M21 18l2 3-5-2z" fill="#e8e8e8"/><circle cx="6" cy="6" r="1" fill="#174c25"/><circle cx="12" cy="6" r="1" fill="#174c25"/><circle cx="15" cy="11" r=".9" fill="#666"/><circle cx="20" cy="11" r=".9" fill="#666"/>'))
 +`<div class="tray">${svg(12,7,'<path d="M.5 6.500L6 1l5.500 5.500" stroke="#fff" stroke-width="1.300"/>','margin-right:1px')}<div style="margin-left:8px;width:17px;height:17px;position:relative"><div style="transform:scale(.72);transform-origin:0 0">${qq}</div>${svg(9,8,'<path d="M0 0h9v6H4L2 8V6H0z" fill="#f5b92e"/><path d="M2 3h1M4 3h1M6 3h1" stroke="#7a4c00"/>','position:absolute;left:8px;top:8px')}</div>
 ${svg(17,12,'<path d="M4 3.500h11.500v7H5z" stroke="#fff"/><path d="M6 5h8v4H6z" fill="#fff"/><path d="M0 3h5v3H1zM1.500 0v3M4 0v3M2.500 6v5" stroke="#fff"/>','margin-left:7px')}
 ${svg(13,13,'<path d="M1 12.500A11 11 0 0 1 12 1.500M4 12.500a8 8 0 0 1 8-8M7 12.500a5 5 0 0 1 5-5" stroke="#c6ccd0" stroke-width="1.300"/><circle cx="11" cy="12" r="1.500" fill="#fff"/>','margin-left:9px')}
 ${svg(17,13,'<path d="M.5 4.500h3l4-4v12l-4-4h-3z" stroke="#fff"/><path d="M9.500 4q2 2.500 0 5M12 2q3.500 4.500 0 9M14.500.5q4 6 0 12" stroke="#fff"/>','margin-left:8px')}
 ${T('中',13,13,9)}<div style="margin-left:13px">${sogou(16)}</div><div class="clock">${T('11:48',31,12)}${T('2020/11/26',66,12)}</div>
 <div class="n">${svg(16,16,'<path d="M0 0h16v13H8l-3 3v-3H0z" fill="#fff"/><path d="M3 3.500h10M3 6.500h10M3 9.500h7" stroke="#091e2c"/>')}<div class="bd">${T('3',6,11,0,'b')}</div></div><div class="end"></div></div>`);

define('axure-desktop',`:host{width:1440px;height:900px;display:flex;flex-direction:column;position:relative;background:#fff}.app{height:859px;border-left:1px solid #ccc;border-right:1px solid #ccc;border-bottom:1px solid #ccc;display:flex;flex-direction:column}.main{display:flex;flex:1;min-height:0}.left{width:201px;border-right:1px solid #ccc;display:flex;flex-direction:column;flex:none}ax-titlebar,ax-menubar,ax-toolbar,ax-formatbar{flex:none}ax-taskbar{margin-top:1px}`,
 `<div class="app"><ax-titlebar></ax-titlebar><ax-menubar></ax-menubar><ax-toolbar></ax-toolbar><ax-formatbar></ax-formatbar><div class="main"><div class="left"><ax-outline></ax-outline><ax-library></ax-library></div><ax-canvas></ax-canvas><ax-inspector></ax-inspector></div></div><ax-taskbar></ax-taskbar><ax-ime></ax-ime>`);
</script>
</body>
</html>
